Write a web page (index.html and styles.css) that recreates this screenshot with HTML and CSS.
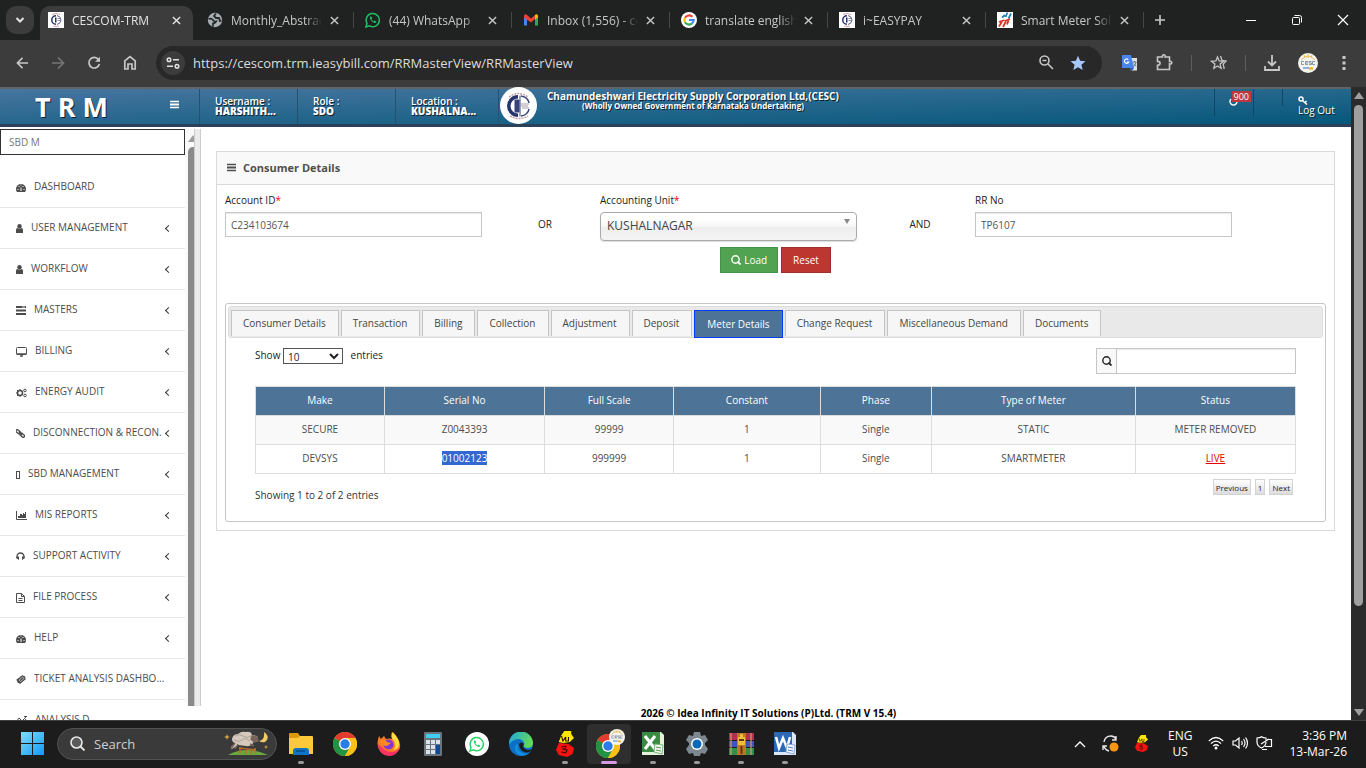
FILE: index.html
```html
<!DOCTYPE html>
<html lang="en">
<head>
    <meta charset="UTF-8">
    <meta name="viewport" content="width=device-width, initial-scale=1.0">
    <title>CESCOM-TRM</title>
    <link rel="stylesheet" href="styles.css">
</head>
<body>

<!-- shared icons -->
<svg class="sprite" aria-hidden="true">
    <symbol id="close" viewBox="0 0 10 10"><path d="M1 1l8 8M9 1l-8 8" stroke="currentColor" stroke-width="1.6" fill="none"/></symbol>
    <symbol id="cesc" viewBox="0 0 16 16"><rect width="16" height="16" fill="#fff"/><path d="M8 3a5 5 0 0 0 0 10V11.500a3.500 3.500 0 0 1 0-7z" fill="#2a356b"/><path d="M7 5.500v5h1.500v-5z" fill="#2a356b"/><path d="M9 3.500q4 1 4 4.500t-4 4.500" fill="none" stroke="#5a628f" stroke-width="1"/><path d="M9.500 6.500h3M9.500 8.500h3" stroke="#8d8fa8" stroke-width="1"/><path d="M4 2.500q4-2 8 0M5 14q3 1 6 0" fill="none" stroke="#c58f95" stroke-width=".8"/></symbol>
    <symbol id="whatsapp" viewBox="0 0 16 16"><path d="M1 15l1-3.700a6.600 6.600 0 1 1 2.600 2.600z" fill="none" stroke="currentColor" stroke-width="1.500"/><path d="M5.700 4.300c-1.200.7-1 2.500.6 4.400s3.700 3 4.900 1.600l.2-.9-1.800-.9-.9.9c-1-.4-1.800-1.200-2.200-2.100l.7-.8-.8-2z" fill="currentColor"/></symbol>
    <symbol id="chrome" viewBox="0 0 24 24"><circle cx="12" cy="12" r="12" fill="#fbc116"/><path d="M12 12L1.600 6a12 12 0 0 1 20.800 0z" fill="#e33b2e"/><path d="M12 12L1.600 6a12 12 0 0 0 10.400 18l5-9z" fill="#229342"/><path d="M12 6h10.400A12 12 0 0 1 12 24l5.200-9z" fill="#fbc116"/><circle cx="12" cy="12" r="6" fill="#fff"/><circle cx="12" cy="12" r="4.700" fill="#2a7de8"/></symbol>
    <symbol id="lens" viewBox="0 0 10 10"><circle cx="4.500" cy="4.500" r="3.700" fill="none" stroke="currentColor" stroke-width="1.400"/><path d="M6.500 6.500l3 3" stroke="currentColor" stroke-width="1.800"/></symbol>
    <symbol id="bars" viewBox="0 0 10 9"><path d="M0 1h10M0 4.500h10M0 8h10" stroke="currentColor" stroke-width="2"/></symbol>
    <symbol id="dash" viewBox="0 0 10 9"><path d="M1 9Q0 8 0 6a5 5 0 0 1 10 0q0 2-1 3z" fill="currentColor"/><path d="M5 8V4.500M1.500 6.500h1M7.500 6.500h1M2.500 3.500h1M6.500 3.500h1M4.500 2h1" stroke="#fff" stroke-width="1"/></symbol>
    <symbol id="user" viewBox="0 0 7 9"><circle cx="3.500" cy="2.200" r="2.200" fill="currentColor"/><path d="M0 9V6q0-2 1.500-2 2 1.200 4 0Q7 4 7 6v3z" fill="currentColor"/></symbol>
    <symbol id="ants" viewBox="0 0 13 26"><path d="M6 0h5v3l2 4-3 4-5 1-3-1 2-7z" fill="#ffe800"/><path d="M2 12l7 1 4 4-1 6-4 3-6-2-2-5z" fill="#f91212"/><path d="M4 5l1 5 2-4v4h2V6M4 16l3-1v2l-2 1 3 1-1 3-3-1" fill="none" stroke="#2b0c00" stroke-width=".8"/></symbol>
    <symbol id="avatar" viewBox="0 0 20 20"><circle cx="10" cy="10" r="10" fill="#f4f3ee"/><path d="M3 7q7-8 14 0M10 1v4M6 2l1 3M14 2l-1 3" fill="none" stroke="#e9bd55" stroke-width="1"/><path d="M6 8.500H3.500v3H6M10 8.500H7.500v3H10M7.500 10H10M13.500 8.500H11V10h2.500v1.500H11M17 8.500h-2.500v3H17" fill="none" stroke="#6f8296" stroke-width=".8"/><path d="M5 15h6" stroke="#8eb4d8" stroke-width="2"/><path d="M11 15.500h4" stroke="#f1b52d" stroke-width="2.500"/></symbol>
</svg>

<div class="tab-strip">
    <button class="tab-search" aria-label="Search tabs"><svg width="10" height="6" viewBox="0 0 10 6"><path d="M1.500 1L5 4.500 8.500 1" fill="none" stroke="#e3e3e3" stroke-width="2"/></svg></button>
    <div class="tab active">
        <svg width="16" height="16"><use href="#cesc"/></svg>
        <span class="tab-title">CESCOM-TRM</span>
        <button class="tab-close" aria-label="Close tab"><svg width="9" height="9"><use href="#close"/></svg></button>
    </div>
    <div class="tab">
        <svg width="16" height="16" viewBox="0 0 16 16"><circle cx="8" cy="8" r="7.200" fill="#a9aeb3"/><path d="M1.500 7q3-1 4.500 1t3 1.500q-1 2-3 2L6 14.500M9 1.500L7 4l2 2h3l1 3 1.500-.5" fill="none" stroke="#25292b" stroke-width="1.800"/></svg>
        <span class="tab-title">Monthly_Abstract</span>
        <button class="tab-close" aria-label="Close tab"><svg width="9" height="9"><use href="#close"/></svg></button>
    </div>
    <div class="tab divided">
        <svg class="green" width="16" height="16"><use href="#whatsapp"/></svg>
        <span class="tab-title">(44) WhatsApp</span>
        <button class="tab-close" aria-label="Close tab"><svg width="9" height="9"><use href="#close"/></svg></button>
    </div>
    <div class="tab divided">
        <svg width="16" height="16" viewBox="0 0 16 16"><path d="M1 4v9.500h3V7z" fill="#4285f4"/><path d="M12 7v6.500h3V4z" fill="#34a853"/><path d="M1 3.500Q2.500 1.500 4 3l4 3.500L12 3v4l-4 3.500L1 5.500z" fill="#ea4335"/><path d="M12 3q2-1.500 3 .5v2L12 7.500z" fill="#fbbc04"/></svg>
        <span class="tab-title">Inbox (1,556) - ces</span>
        <button class="tab-close" aria-label="Close tab"><svg width="9" height="9"><use href="#close"/></svg></button>
    </div>
    <div class="tab divided">
        <svg width="16" height="16" viewBox="0 0 16 16"><circle cx="8" cy="8" r="8" fill="#fff"/><g fill="none" stroke-width="2.200"><path d="M11.300 4.800A4.600 4.600 0 0 0 4 5.800" stroke="#ea4335"/><path d="M4 5.800a4.600 4.600 0 0 0 0 4.400" stroke="#fbbc04"/><path d="M4 10.200a4.600 4.600 0 0 0 7 1.200" stroke="#34a853"/><path d="M11 11.400A4.600 4.600 0 0 0 12.600 8H8" stroke="#4285f4"/></g></svg>
        <span class="tab-title">translate english</span>
        <button class="tab-close" aria-label="Close tab"><svg width="9" height="9"><use href="#close"/></svg></button>
    </div>
    <div class="tab divided">
        <svg width="16" height="16"><use href="#cesc"/></svg>
        <span class="tab-title">i~EASYPAY</span>
        <button class="tab-close" aria-label="Close tab"><svg width="9" height="9"><use href="#close"/></svg></button>
    </div>
    <div class="tab divided">
        <svg width="16" height="16" viewBox="0 0 16 16"><rect width="16" height="16" fill="#fff"/><g fill="none" stroke-width="1.800"><path d="M8.500 5l2-4.500M11.500 6.500l2.500-5M5 5.500L8 3" stroke="#2382b8"/><path d="M2 14.500l3-5M6 15l3-6M10 12.500l1.500-4M2 10l5.500-2M8 9l5-2" stroke="#dc3527"/></g></svg>
        <span class="tab-title">Smart Meter Solution</span>
        <button class="tab-close" aria-label="Close tab"><svg width="9" height="9"><use href="#close"/></svg></button>
    </div>
    <button class="new-tab" aria-label="New tab"><svg width="12" height="12" viewBox="0 0 12 12"><path d="M6 1v10M1 6h10" stroke="#c7c7c7" stroke-width="1.600"/></svg></button>
    <div class="window-controls">
        <button aria-label="Minimize"><svg width="12" height="12" viewBox="0 0 12 12"><path d="M1 6.500h10" stroke="#fff"/></svg></button>
        <button aria-label="Restore"><svg width="12" height="12" viewBox="0 0 12 12"><rect x="1.500" y="3.500" width="7" height="7" rx="1" fill="none" stroke="#fff"/><path d="M3.500 1.500h5q2 0 2 2v5" fill="none" stroke="#fff"/></svg></button>
        <button aria-label="Close"><svg width="12" height="12" viewBox="0 0 12 12"><path d="M1 1l10 10M11 1L1 11" stroke="#fff" stroke-width="1.200"/></svg></button>
    </div>
</div>

<div class="toolbar">
    <div class="nav-buttons">
        <button aria-label="Back"><svg width="13" height="14" viewBox="0 0 14 14"><path d="M13 7H2M7 1.500L1.500 7 7 12.500" fill="none" stroke="#c7c7c7" stroke-width="1.700"/></svg></button>
        <button aria-label="Forward"><svg width="14" height="14" viewBox="0 0 14 14"><path d="M1 7h11M7 1.500L12.500 7 7 12.500" fill="none" stroke="#757575" stroke-width="1.700"/></svg></button>
        <button aria-label="Reload"><svg width="14" height="14" viewBox="0 0 14 14"><path d="M11.500 3.500A5.300 5.300 0 1 0 12.400 8" fill="none" stroke="#c7c7c7" stroke-width="1.700"/><path d="M13 .8v5H8z" fill="#c7c7c7"/></svg></button>
        <button aria-label="Home"><svg width="14" height="15" viewBox="0 0 14 15"><path d="M1.800 5.800L7 1.500l5.200 4.300V14H9V9H5v5H1.800z" fill="none" stroke="#c7c7c7" stroke-width="1.700"/></svg></button>
    </div>
    <div class="omnibox">
        <button class="site-info" aria-label="Site information"><svg width="14" height="12" viewBox="0 0 14 12"><g fill="none" stroke="#e3e3e3" stroke-width="1.500"><circle cx="3" cy="2.800" r="1.800"/><path d="M7 2.800h6M1 9.200h6"/><circle cx="11" cy="9.200" r="1.800"/></g></svg></button>
        <input type="text" aria-label="Address" value="https://cescom.trm.ieasybill.com/RRMasterView/RRMasterView">
        <button aria-label="Zoom"><svg width="15" height="15" viewBox="0 0 15 15"><circle cx="5.500" cy="5.500" r="4.500" fill="none" stroke="#c7c7c7" stroke-width="1.600"/><path d="M9 9l5 5M3.500 5.500h4" stroke="#c7c7c7" stroke-width="1.600"/></svg></button>
        <button aria-label="Bookmark"><svg width="16" height="16" viewBox="0 0 16 16"><path d="M8 .8l2.100 5 5.400.4-4.100 3.500 1.300 5.300L8 12.200 3.300 15l1.300-5.300L.5 6.200l5.400-.4z" fill="#a8c7fa"/></svg></button>
    </div>
    <div class="extensions">
        <button aria-label="Translate"><svg width="16" height="16" viewBox="0 0 16 16"><path d="M6 3h9v12.500H9z" fill="#dfe1e3"/><path d="M0 0h9l3 13H0z" fill="#4a86f0"/><path d="M8 13h4l-2.500 3z" fill="#2459b8"/><path d="M6.200 4.600A2.200 2.200 0 1 0 6.700 7H4.800" fill="none" stroke="#fff" stroke-width="1.200"/><path d="M10.500 7h4M12.500 6v1M11 12q2.500-2 3-5M11.500 8.500l2.500 3" fill="none" stroke="#68788a"/></svg></button>
        <button aria-label="Extensions"><svg width="17" height="17" viewBox="0 0 17 17"><path d="M1.500 3h5Q6 .8 7.800.8T9.100 3h4.400v4.500q2.300-.4 2.300 1.200t-2.300 1.200V15.500h-12v-4.300q2.600-.3 2.600-2T1.500 7.400z" fill="none" stroke="#c7c7c7" stroke-width="1.600"/></svg></button>
        <span class="split"></span>
        <button aria-label="Favorites"><svg width="17" height="16" viewBox="0 0 17 16"><path d="M7.500 2l1.600 4 4.400.3-3.400 2.800 1.100 4.200-3.700-2.300-3.700 2.300 1.100-4.200L1.500 6.300 5.900 6zM10.500 1l1.500 4.500 4.200.5-3 3 1 5" fill="none" stroke="#c7c7c7" stroke-width="1.300"/></svg></button>
        <span class="split"></span>
        <button aria-label="Downloads"><svg width="16" height="16" viewBox="0 0 16 16"><path d="M8 0v10M4 6.500L8 10.500l4-4M1 11v4h14v-4" fill="none" stroke="#c7c7c7" stroke-width="1.800"/></svg></button>
        <button aria-label="Profile"><svg width="20" height="20"><use href="#avatar"/></svg></button>
        <button class="more" aria-label="More"><svg width="4" height="14" viewBox="0 0 4 14"><path d="M.5 0h3v3h-3zM.5 5.500h3v3h-3zM.5 11h3v3h-3z" fill="#c7c7c7"/></svg></button>
    </div>
</div>

<div class="viewport">
    <div class="page">
        <header class="top-header">
            <div class="brand">
                <h1>T R M</h1>
                <button class="menu-toggle" aria-label="Toggle menu"><svg width="9" height="9" viewBox="0 0 10 9"><use href="#bars"/></svg></button>
            </div>
            <div class="info"><span>Username :</span><b>HARSHITH...</b></div>
            <div class="info"><span>Role :</span><b>SDO</b></div>
            <div class="info location"><span>Location :</span><b>KUSHALNA...</b></div>
            <svg class="logo" width="37" height="37" viewBox="0 0 37 37"><circle cx="18.500" cy="18.500" r="18.500" fill="#fff"/><path d="M18 8a11 11 0 0 0 0 22v-3.500a7.500 7.500 0 0 1 0-15z" fill="#27336d"/><path d="M15 13h4v12h-4zM20 8.500v21" fill="#38437a" stroke="#38437a" stroke-width="1"/><path d="M21 9q7 1 8 7M21 29q7-1 8-7" fill="none" stroke="#38437a" stroke-width="1.500"/><path d="M21 17h8M21 19h7M22 21h7" stroke="#a6a2ae" stroke-width="1.200"/><path d="M9 10q9-7 19 0M10 29q9 5 18 0" fill="none" stroke="#c29ba2" stroke-width="1.500" stroke-dasharray="2 1"/></svg>
            <div class="company">
                <p>Chamundeshwari Electricity Supply Corporation Ltd,(CESC)</p>
                <small>(Wholly Owned Government of Karnataka Undertaking)</small>
            </div>
            <div class="notify">
                <svg width="9" height="10" viewBox="0 0 9 10"><path d="M2 3a3.500 3.500 0 1 0 5 0" fill="none" stroke="#fff" stroke-width="1.500"/></svg>
                <span class="badge">900</span>
            </div>
            <div class="mini-split"></div>
            <a class="logout" href="#">
                <svg width="10" height="9" viewBox="0 0 10 9"><circle cx="3" cy="3" r="2" fill="none" stroke="#fff" stroke-width="1.500"/><path d="M4.500 4.500l4.500 4M7 6.500L8.500 5" stroke="#fff" stroke-width="1.500"/></svg>
                Log Out
            </a>
        </header>

        <div class="body">
            <aside class="sidebar">
                <nav class="menu">
                    <input class="menu-search" type="text" aria-label="Search menu" value="SBD M">
                    <a href="#"><svg width="10" height="9"><use href="#dash"/></svg>DASHBOARD</a>
                    <a class="sub" href="#"><svg width="7" height="9"><use href="#user"/></svg>USER MANAGEMENT</a>
                    <a class="sub" href="#"><svg width="7" height="9"><use href="#user"/></svg>WORKFLOW</a>
                    <a class="sub" href="#"><svg width="10" height="9" viewBox="0 0 10 9"><path d="M0 1h10M0 4.500h10M0 8h10" stroke="currentColor" stroke-width="2"/><path d="M6 1h3" stroke="#fff" stroke-width=".8"/></svg>MASTERS</a>
                    <a class="sub" href="#"><svg width="11" height="10" viewBox="0 0 11 10"><rect x=".5" y=".5" width="10" height="7" rx="1" fill="none" stroke="currentColor"/><path d="M.5 7h10M4 9h3" stroke="currentColor" stroke-width="1.500"/></svg>BILLING</a>
                    <a class="sub" href="#"><svg width="11" height="10" viewBox="0 0 11 10"><g fill="none" stroke="currentColor"><circle cx="4" cy="5" r="2.500" stroke-width="1.500"/><path d="M4 1v1M4 8v1M0 5h1M1 2l1 1M1 8l1-1M7 5H6"/><circle cx="9" cy="2.500" r="1.300"/><circle cx="9" cy="7.500" r="1.300"/></g></svg>ENERGY AUDIT</a>
                    <a class="sub" href="#"><svg width="9" height="9" viewBox="0 0 9 9"><g fill="none" stroke="currentColor" stroke-width="1.400"><rect x="-.5" y="1.500" width="5" height="2.500" rx="1" transform="rotate(40 2 3)"/><rect x="4" y="5" width="5" height="2.500" rx="1" transform="rotate(40 6.500 6)"/><path d="M3 3l3 3"/></g></svg>DISCONNECTION &amp; RECON.</a>
                    <a class="sub" href="#"><svg width="4" height="8" viewBox="0 0 4 8"><rect x=".5" y=".5" width="3" height="7" fill="none" stroke="currentColor"/></svg>SBD MANAGEMENT</a>
                    <a class="sub" href="#"><svg width="11" height="9" viewBox="0 0 11 9"><path d="M.5 0v8.500H11" fill="none" stroke="currentColor"/><path d="M2 7V5h2V3h2v1h1V2h1v1h1V1h1v6z" fill="currentColor"/></svg>MIS REPORTS</a>
                    <a class="sub" href="#"><svg width="9" height="9" viewBox="0 0 9 9"><path d="M1 6V4.500a3.500 3.500 0 0 1 7 0V6" fill="none" stroke="currentColor" stroke-width="1.300"/><path d="M1 4.500h2V8L0 6zM6 4.500h2L9 6 6 8z" fill="currentColor"/></svg>SUPPORT ACTIVITY</a>
                    <a class="sub" href="#"><svg width="9" height="10" viewBox="0 0 9 10"><path d="M.5.500h5l3 3v6h-8zM5.500.500v3h3M2.500 5.500h4M2.500 7.500h4" fill="none" stroke="currentColor"/></svg>FILE PROCESS</a>
                    <a class="sub" href="#"><svg width="10" height="9"><use href="#dash"/></svg>HELP</a>
                    <a href="#"><svg width="10" height="9" viewBox="0 0 10 9"><path d="M6.500 0l1 1 .5-.3L9.500 2 9 3l1 1-6 5-1-1-.5.200L1 7l.5-1-1.500-1z" fill="currentColor"/><path d="M3 5l3.500-3L8 3.500 4.500 6.500z" fill="none" stroke="#fff" stroke-width=".6"/></svg>TICKET ANALYSIS DASHBO...</a>
                    <a href="#"><svg width="11" height="9" viewBox="0 0 11 9"><path d="M0 6l3-4 3 3 4.500-4.500M1 8l3-4 3 3 3-4M8 .5h3" fill="none" stroke="currentColor"/></svg>ANALYSIS D</a>
                </nav>
                <div class="menu-scroll"><span class="arrow-up"></span><span class="thumb"></span></div>
                <div class="gutter"></div>
            </aside>

            <main class="content">
                <section class="panel">
                    <h2><svg width="9" height="9" viewBox="0 0 10 9"><use href="#bars"/></svg>Consumer Details</h2>
                    <form class="search-form">
                        <div class="fields">
                            <div class="field">
                                <label for="account">Account ID<i>*</i></label>
                                <input type="text" id="account" value="C234103674">
                            </div>
                            <span class="joiner">OR</span>
                            <div class="field">
                                <label for="unit">Accounting Unit<i>*</i></label>
                                <div class="chosen">
                                    <select id="unit"><option>KUSHALNAGAR</option></select>
                                </div>
                            </div>
                            <span class="joiner">AND</span>
                            <div class="field">
                                <label for="rrno">RR No</label>
                                <input type="text" id="rrno" value="TP6107">
                            </div>
                        </div>
                        <div class="buttons">
                            <button type="button" class="btn load"><svg width="10" height="10"><use href="#lens"/></svg>Load</button>
                            <button type="button" class="btn reset">Reset</button>
                        </div>
                    </form>

                    <div class="tabs-box">
                        <div class="tabs">
                            <button>Consumer Details</button>
                            <button>Transaction</button>
                            <button>Billing</button>
                            <button>Collection</button>
                            <button>Adjustment</button>
                            <button>Deposit</button>
                            <button class="current">Meter Details</button>
                            <button>Change Request</button>
                            <button>Miscellaneous Demand</button>
                            <button>Documents</button>
                        </div>
                        <div class="tab-body">
                            <div class="table-tools">
                                <label class="length">Show
                                    <select><option>10</option><option>25</option></select>
                                    entries</label>
                                <div class="filter">
                                    <label for="filter"><svg width="10" height="10"><use href="#lens"/></svg></label>
                                    <input type="text" id="filter" aria-label="Filter">
                                </div>
                            </div>
                            <table>
                                <colgroup><col class="c1"><col class="c2"><col class="c1"><col class="c3"><col class="c4"><col class="c5"><col class="c2"></colgroup>
                                <thead>
                                    <tr><th>Make</th><th>Serial No</th><th>Full Scale</th><th>Constant</th><th>Phase</th><th>Type of Meter</th><th>Status</th></tr>
                                </thead>
                                <tbody>
                                    <tr><td>SECURE</td><td>Z0043393</td><td>99999</td><td>1</td><td>Single</td><td>STATIC</td><td>METER REMOVED</td></tr>
                                    <tr><td>DEVSYS</td><td><mark>01002123</mark></td><td>999999</td><td>1</td><td>Single</td><td>SMARTMETER</td><td><a href="#">LIVE</a></td></tr>
                                </tbody>
                            </table>
                            <div class="table-foot">
                                <p>Showing 1 to 2 of 2 entries</p>
                                <div class="pager">
                                    <button>Previous</button>
                                    <button>1</button>
                                    <button>Next</button>
                                </div>
                            </div>
                        </div>
                    </div>
                </section>
                <footer>2026 © Idea Infinity IT Solutions (P)Ltd. (TRM V 15.4)</footer>
            </main>
        </div>
    </div>
    <div class="page-scroll"><span class="arrow-up"></span><span class="thumb"></span><span class="rest"></span><span class="arrow-down"></span></div>
</div>

<div class="taskbar">
    <button class="start" aria-label="Start"><svg width="23" height="23" viewBox="0 0 23 23"><defs><linearGradient id="win" x1="0" y1="0" x2="1" y2="1"><stop offset="0" stop-color="#7fdcfb"/><stop offset="1" stop-color="#1399f5"/></linearGradient></defs><path d="M0 0h11v11H0zM12 0h11v11H12zM0 12h11v11H0zM12 12h11v11H12z" fill="url(#win)"/></svg></button>
    <div class="task-search">
        <svg width="15" height="15" viewBox="0 0 15 15"><circle cx="6.500" cy="6.500" r="5.500" fill="#5a5a5a" stroke="#e8e8e8" stroke-width="1.600"/><path d="M10.500 10.500l4 4" stroke="#e8e8e8" stroke-width="1.800"/></svg>
        <input type="text" aria-label="Search" placeholder="Search">
        <svg width="46" height="25" viewBox="0 0 46 25"><path d="M4 24q18-10 40 0z" fill="#6ba73c"/><path d="M16 22v-6M31 22v-5M15 17l17 2M22 19v4M27 19v4" stroke="#b56e2c" stroke-width="1.600"/><path d="M8 8q1-5 6-5 3-3 8-2 5-1 6 3l5 1 1 4-4 1q-2 6-8 5l-8-1-6 4-1-2 4-4q-3-1-3-4z" fill="#d5c8bc"/><path d="M11 5q4-3 8 0t8 0M10 9q5 3 8 0t8 1" fill="none" stroke="#b0a096"/><path d="M28 5l5 1 1 4-4 1-3-3zM11 12l-4 6M14 13l-3 5M26 13l4 2" fill="#77655b" stroke="#77655b" stroke-width="1.400"/><path d="M40 1q7 5 1 10-3 1-6-1 6-1 5-9z" fill="#f3cb66"/><path d="M3 3l.8 2.200L6 6l-2.200.8L3 9l-.8-2.200L0 6l2.200-.8zM42 14l.6 1.400L44 16l-1.400.6L42 18l-.6-1.400L40 16l1.400-.6z" fill="#e5a93c"/></svg>
    </div>
    <div class="apps">
        <button class="running" aria-label="File Explorer"><svg width="24" height="24" viewBox="0 0 24 24"><path d="M0 2q0-1 1-1h8l2 3h12v7H0z" fill="#d99a0b"/><path d="M0 6h9l2-2h12q1 0 1 1v17H0z" fill="#fcc93b"/><path d="M4 23v-4q0-3 3-3h10q3 0 3 3v4z" fill="#1173c5"/><path d="M7 19h9" stroke="#0b5597" stroke-width="2"/></svg></button>
        <button aria-label="Chrome"><svg width="24" height="24"><use href="#chrome"/></svg></button>
        <button aria-label="Firefox"><svg width="24" height="24" viewBox="0 0 24 24"><path d="M2 4l2 3 3-3 2 3q4-1 6 0-1-4 1-7 3 3 5 7 5 8-1 13-7 6-15 1-7-6-3-17z" fill="#ff7a25"/><path d="M15 0q-2 5 2 9 3 5-1 9 7-1 6-8-1-5-7-10z" fill="#ffdc3b"/><path d="M1 12q1 12 12 12 7-1 10-8-7 7-15 2-4-3-7-6z" fill="#f93363"/><circle cx="11.500" cy="12.500" r="5" fill="#8138d5"/><path d="M3 8q5-1 7 2l4 1-4 3q-5 0-7-6z" fill="#ff8a21"/></svg></button>
        <button aria-label="Calculator"><svg width="18" height="24" viewBox="0 0 18 24"><rect width="18" height="24" rx="1" fill="#69747d"/><path d="M2 2h14v4H2z" fill="#40cef4"/><path d="M2 8h4v4H2zM7 8h4v4H7zM12 8h4v4h-4zM2 13h4v4H2zM7 13h4v4H7zM2 18h4v4H2zM7 18h4v4H7z" fill="#dae2e9"/><path d="M12 13h4v9h-4z" fill="#0b4d91"/></svg></button>
        <button class="wa" aria-label="WhatsApp"><svg width="24" height="24" viewBox="0 0 24 24"><circle cx="12" cy="12" r="12" fill="#fff"/><use href="#whatsapp" x="4" y="4" width="16" height="16"/></svg></button>
        <button aria-label="Edge"><svg width="24" height="24" viewBox="0 0 24 24"><defs><linearGradient id="edge" x1="0" y1="0" x2="1" y2=".3"><stop offset="0" stop-color="#1ba8e8"/><stop offset="1" stop-color="#63d956"/></linearGradient></defs><circle cx="12" cy="12" r="12" fill="#0c70c6"/><path d="M0 12A12 12 0 0 1 24 11q0 5-6 5-5-1-3-3 1-3-2-5Q7 5 0 12z" fill="url(#edge)"/><path d="M9 12q-2 6 4 9 4 2 8-1-4 5-11 3-5-4-4-8 1-3 3-3z" fill="#1391dc"/><path d="M10 12q2-3 5 0-2 3 1 5 3 2 7 0-3 5-8 3-5-3-5-8z" fill="#1c1c1c"/></svg></button>
        <button class="running" aria-label="Billing tool"><svg width="18" height="26" viewBox="0 0 13 26" preserveAspectRatio="none"><use href="#ants"/></svg></button>
        <button class="running focused" aria-label="Chrome, CESCOM profile"><svg width="34" height="30" viewBox="0 0 34 30"><use href="#chrome" x="4" y="5" width="24" height="24"/><use href="#avatar" x="17" y="0" width="16" height="16"/></svg></button>
        <button class="running" aria-label="Excel"><svg width="23" height="23" viewBox="0 0 23 23"><path d="M0 0h19l3 3v20H0z" fill="#e3f1dc"/><path d="M0 0h18v20H0z" fill="#398d43"/><path d="M3 4l10 13M13 4L3 17" stroke="#fff" stroke-width="3"/><path d="M13 12l8 1-1 9-8-2z" fill="#f2f8ee" stroke="#78b77c"/><path d="M14 15l5 1M14 18l5 1" stroke="#4d9a56"/></svg></button>
        <button class="running" aria-label="Settings"><svg width="24" height="24" viewBox="0 0 24 24"><path d="M9 0h6l1 4 4-1 3 5-3 3v2l3 4-3 5-4-1-1 3H9l-1-3-4 1-3-5 3-4v-2L1 8l3-5 4 1z" fill="#7d8790"/><circle cx="12" cy="12" r="6" fill="#fff"/><circle cx="12" cy="12" r="4.500" fill="#0b69bd"/></svg></button>
        <button class="running" aria-label="WinRAR"><svg width="25" height="24" viewBox="0 0 25 24"><path d="M0 1h25v7H0z" fill="#b0314d"/><path d="M0 9h25v6H0z" fill="#4355b8"/><path d="M0 16h25v7H0z" fill="#339048"/><path d="M2 1v22M22 1v22" stroke="#e3aa75"/><path d="M8 1h9v22H8z" fill="#bd7726"/><path d="M9 5h7v8H9zM11 2h3v4h-3z" fill="#f2bd3a"/><path d="M10 8h5M12.500 14v8" stroke="#603712" stroke-width="2"/></svg></button>
        <button class="running" aria-label="Word"><svg width="23" height="23" viewBox="0 0 23 23"><path d="M0 0h19l3 3v20H0z" fill="#dce8f7"/><path d="M0 0h18v20H0z" fill="#2b68b5"/><path d="M2 5l3 11 4-10 4 10L16 5" fill="none" stroke="#fff" stroke-width="2.500"/><path d="M13 12l8 1-1 9-8-2z" fill="#f4f8fc" stroke="#86abd9"/><path d="M14 15l5 1M14 18l5 1" stroke="#4d7fbe"/></svg></button>
    </div>
    <div class="tray">
        <svg width="12" height="8" viewBox="0 0 12 8"><path d="M1 7l5-5 5 5" fill="none" stroke="#fff" stroke-width="1.400"/></svg>
        <svg width="17" height="17" viewBox="0 0 17 17"><path d="M2 7q1-6 7-6 3 0 5 3M14 1v4h-4M7 16q-4-1-5-5M5 11H1v4" fill="none" stroke="#e8e8e8" stroke-width="1.400"/><circle cx="12" cy="12" r="4.500" fill="#fb9711"/></svg>
        <svg width="13" height="17" viewBox="0 0 13 26" preserveAspectRatio="none"><use href="#ants"/></svg>
        <div class="lang">ENG<br>US</div>
        <div class="status">
            <svg width="16" height="14" viewBox="0 0 16 14"><g fill="none" stroke="#fff" stroke-width="1.300"><path d="M.8 5q7.200-7 14.400 0M3 7.500q5-4.800 10 0M5.300 10q2.700-2.500 5.400 0"/></g><circle cx="8" cy="12" r="1.500" fill="#fff"/></svg>
            <svg width="16" height="14" viewBox="0 0 16 14"><path d="M1 5h2.500L7 2v10L3.500 9H1zM9.500 5q1.500 2 0 4M11.500 3q3 4 0 8M13.500 1.500q4 5.500 0 11" fill="none" stroke="#fff" stroke-width="1.200"/></svg>
            <svg width="17" height="15" viewBox="0 0 17 15"><path d="M1 2q3 0 4.500-1.300Q7 2 10 2v4q0 4-4.500 6Q1 10 1 6zM11 3.500h4.500v7H9M11 13.500H6M5 8l8-5" fill="none" stroke="#fff" stroke-width="1.200"/></svg>
        </div>
        <div class="clock">3:36 PM<br>13-Mar-26</div>
    </div>
</div>

</body>
</html>
```

FILE: styles.css
```css
* {
    box-sizing: border-box;
}
html, body {
    height: 100%;
    margin: 0;
}
body {
    display: flex;
    flex-direction: column;
    overflow: hidden;
    font-family: "Open Sans", sans-serif;
    font-size: 10px;
    color: #333;
    background-color: #fff;
}
button, input, select {
    font-family: inherit;
    font-size: inherit;
    color: inherit;
    margin: 0;
}
button {
    padding: 0;
    border: none;
    background: none;
    cursor: pointer;
}
svg {
    display: block;
    flex-shrink: 0;
}
.sprite {
    display: none;
}

/* Browser tabs */
.tab-strip {
    display: flex;
    flex-shrink: 0;
    height: 40px;
    padding: 6px 12px 0 6px;
    background-color: #1f2221;
    color: #c7c7c7;
    font-size: 12px;
}
.tab-search {
    display: flex;
    align-items: center;
    justify-content: center;
    width: 28px;
    height: 28px;
    margin-right: 6px;
    border-radius: 10px;
    background-color: #3c3c3c;
}
.tab {
    display: flex;
    align-items: center;
    width: 155px;
    height: 28px;
    padding: 0 14px 0 9px;
}
.tab.active {
    width: 153px;
    height: 34px;
    padding: 0 12px 6px 8px;
    margin-right: 5px;
    border-radius: 10px 10px 0 0;
    background-color: #3c3c3c;
    color: #e3e3e3;
}
.tab.divided {
    width: 158px;
    padding-left: 12px;
    background: linear-gradient(#444746, #444746) no-repeat 0 6px / 1px 16px;
}
.tab-title {
    flex: 1;
    margin: 0 8px;
    overflow: hidden;
    white-space: nowrap;
    -webkit-mask-image: linear-gradient(to right, #000 82%, transparent);
    mask-image: linear-gradient(to right, #000 82%, transparent);
}
.green {
    color: #21c063;
}
.new-tab {
    width: 34px;
    height: 28px;
    padding-left: 11px;
    background: linear-gradient(#444746, #444746) no-repeat 0 6px / 1px 16px;
}
.window-controls {
    display: flex;
    gap: 34px;
    height: 28px;
    margin: 0 5px 0 auto;
}

/* Browser toolbar */
.toolbar {
    display: flex;
    align-items: center;
    flex-shrink: 0;
    height: 47px;
    padding: 0 20px 2px 16px;
    background-color: #3c3c3c;
}
.nav-buttons {
    display: flex;
    gap: 22px;
    margin-right: 19px;
}
.omnibox {
    display: flex;
    flex: 1;
    align-items: center;
    gap: 16px;
    height: 34px;
    padding: 0 16px 0 5px;
    border-radius: 17px;
    background-color: #282828;
}
.omnibox input {
    flex: 1;
    min-width: 0;
    margin-left: -8px;
    padding: 0;
    border: none;
    outline: none;
    background: none;
    color: #dcdcdc;
    font-size: 13px;
}
.site-info {
    display: flex;
    align-items: center;
    justify-content: center;
    width: 24px;
    height: 24px;
    border-radius: 50%;
    background-color: #3c3c3c;
}
.extensions {
    display: flex;
    align-items: center;
    gap: 18px;
    margin-left: 20px;
}
.extensions .more {
    margin-left: 6px;
}
.split {
    width: 1px;
    height: 16px;
    background-color: #5e5e5e;
}

/* Page */
.viewport {
    display: flex;
    flex: 1;
    min-height: 0;
}
.page {
    display: flex;
    flex: 1;
    flex-direction: column;
    min-width: 0;
}
.top-header {
    display: flex;
    flex-shrink: 0;
    height: 40px;
    border-top: 2px solid #5f6468;
    border-bottom: 3px solid #2c4158;
    background: linear-gradient(to bottom right, #47759f, #04587a);
    color: #fff;
    line-height: 10px;
    text-shadow: 1px 1px 0 #14212c;
}
.brand {
    display: flex;
    align-items: center;
    justify-content: space-between;
    width: 200px;
    padding: 0 20px 0 35px;
    border-right: 1px solid #27506e;
}
.brand h1 {
    margin: 0;
    font-size: 27px;
    line-height: 35px;
}
.menu-toggle {
    padding-bottom: 4px;
}
.info {
    width: 98px;
    padding: 7px 0 0 15px;
    border-right: 1px solid #27506e;
    font-weight: 600;
}
.info span, .info b {
    display: block;
}
.info.location {
    width: 103px;
}
.logo {
    margin: -2px 10px 0 1px;
}
.company {
    text-align: center;
    font-weight: 700;
}
.company p {
    margin: 2px 0 0;
}
.company small {
    display: block;
    font-size: 8px;
}
.notify {
    position: relative;
    width: 40px;
    height: 27px;
    margin-left: auto;
    padding: 7px 0 0 14px;
    border-left: 1px solid #0d4765;
    border-right: 1px solid #0d4765;
}
.badge {
    position: absolute;
    top: 2px;
    right: 2px;
    padding: 0 2px;
    background-color: #c0373d;
    font-size: 9px;
    line-height: 11px;
    text-shadow: none;
}
.mini-split {
    width: 29px;
    height: 17px;
    border-right: 1px solid #0d4765;
}
.logout {
    width: 68px;
    padding: 7px 0 0 15px;
    color: #fff;
    text-decoration: none;
}
.body {
    display: flex;
    flex: 1;
    min-height: 0;
}

/* Sidebar */
.sidebar {
    display: flex;
    flex-shrink: 0;
    padding-top: 2px;
    overflow: hidden;
}
.menu {
    width: 185px;
}
.menu-search {
    display: block;
    width: 185px;
    height: 26px;
    margin-bottom: 12px;
    padding: 0 8px;
    border: 1px solid #333;
    outline: none;
    color: #777;
}
.menu a {
    position: relative;
    display: flex;
    align-items: center;
    gap: 8px;
    height: 41px;
    padding: 0 0 2px 16px;
    border-bottom: 1px solid #e7e7e7;
    color: #4c4c4c;
    text-decoration: none;
    white-space: nowrap;
}
.menu a svg {
    margin-top: 3px;
}
.menu a.sub::after {
    content: "";
    position: absolute;
    top: 18px;
    right: 14px;
    width: 4px;
    height: 4px;
    border-left: 1px solid #333;
    border-bottom: 1px solid #333;
    transform: rotate(45deg);
}
.menu-scroll {
    width: 9px;
    height: 577px;
    padding: 6px 0 0 3px;
    background-color: #fafafa;
    overflow: hidden;
}
.arrow-up, .arrow-down {
    display: block;
    border: 5px solid transparent;
    border-top-width: 0;
    border-bottom: 7px solid #9f9f9f;
}
.arrow-down {
    border-top: 7px solid #9f9f9f;
    border-bottom-width: 0;
}
.menu-scroll .arrow-up {
    width: 10px;
}
.menu-scroll .thumb {
    display: block;
    width: 10px;
    height: 100%;
    margin-top: 5px;
    border-radius: 5px;
    background-color: #8a8a8a;
}
.gutter {
    width: 7px;
    height: 577px;
    border-left: 1px solid #ccc;
    border-right: 1px solid #ccc;
    background-color: #ebebeb;
}

/* Content */
.content {
    display: flex;
    flex: 1;
    flex-direction: column;
    justify-content: space-between;
    min-width: 0;
    padding: 24px 16px 0 15px;
}
.panel {
    border: 1px solid #d9d9d9;
}
.panel h2 {
    display: flex;
    align-items: center;
    gap: 7px;
    height: 33px;
    margin: 0;
    padding: 0 0 2px 10px;
    border-bottom: 1px solid #d9d9d9;
    background-color: #f9f9f9;
    color: #4f4f4f;
    font-size: 11px;
}
.search-form {
    padding: 8px;
}
.fields {
    display: grid;
    grid-template-columns: 257fr 118fr 257fr 118fr 257fr 94fr;
}
.field label {
    display: block;
    height: 19px;
    line-height: 14px;
    color: #222;
}
.field label i {
    color: #f00;
    font-style: normal;
}
.field input, .filter input {
    width: 100%;
    height: 25px;
    padding: 0 5px;
    border: 1px solid #c6c6c6;
    outline: none;
    box-shadow: inset 0 1px 1px #e9e9e9;
    color: #555;
}
.chosen {
    position: relative;
}
.chosen::after {
    content: "";
    position: absolute;
    top: 7px;
    right: 7px;
    border: 3px solid transparent;
    border-top: 5px solid #888;
    border-bottom-width: 0;
}
.chosen select {
    display: block;
    width: 100%;
    height: 29px;
    padding: 0 6px 2px;
    appearance: none;
    border: 1px solid #aaa;
    border-radius: 4px;
    background: linear-gradient(#fff 20%, #f6f6f6 50%, #eee 52%, #f4f4f4);
    box-shadow: 0 1px 1px #ddd;
    color: #444;
    font-size: 12px;
}
.joiner {
    padding: 24px 0 0 8px;
    text-align: center;
    color: #222;
}
.buttons {
    display: flex;
    justify-content: center;
    gap: 3px;
    padding: 6px 0 22px;
}
.btn {
    display: flex;
    align-items: center;
    justify-content: center;
    gap: 3px;
    height: 26px;
    padding: 0 10px;
    border: 1px solid #44914a;
    background-color: #51a351;
    color: #fff;
}
.btn.reset {
    padding: 0 11px;
    border-color: #a02e2a;
    background-color: #bd362f;
}
.tabs-box {
    margin: 0 8px 8px;
    padding: 2px;
    border: 1px solid #c5c5c5;
    border-radius: 3px;
}
.tabs {
    display: flex;
    gap: 2px;
    height: 32px;
    padding: 3px 2px 0;
    border: 1px solid #ddd;
    border-radius: 3px;
    background-color: #e9e9e9;
}
.tabs button {
    height: 26px;
    padding: 0 12px 2px 11px;
    border: 1px solid #c5c5c5;
    border-bottom: none;
    background-color: #f6f6f6;
    color: #454545;
    white-space: nowrap;
}
.tabs button.current {
    height: 28px;
    padding: 0 12px;
    border: 1px solid #003eff;
    background-color: #4d7396;
    color: #fff;
}
.tab-body {
    padding: 10px 27px 17px;
}
.table-tools {
    display: flex;
    justify-content: space-between;
    height: 38px;
    color: #222;
}
.length {
    line-height: 15px;
}
.length select {
    width: 60px;
    height: 16px;
    margin-right: 5px;
    padding: 0;
    border: 1px solid #555;
    border-radius: 0;
    background-color: #fff;
    vertical-align: top;
}
.filter {
    display: flex;
    width: 200px;
    height: 26px;
}
.filter label {
    display: flex;
    align-items: center;
    padding: 0 4px 0 5px;
    border: 1px solid #c6c6c6;
    border-right: none;
    background-color: #f9f9f9;
}
.filter input {
    flex: 1;
    height: 26px;
    min-width: 0;
}
table {
    width: 100%;
    border-collapse: collapse;
    table-layout: fixed;
    text-align: center;
    color: #4c4c4c;
}
.c1 {
    width: 12.400%;
}
.c2 {
    width: 15.400%;
}
.c3 {
    width: 14.100%;
}
.c4 {
    width: 10.700%;
}
.c5 {
    width: 19.600%;
}
th, td {
    height: 29px;
    padding: 0 0 2px;
    border: 1px solid #ddd;
}
th {
    background-color: #4d7396;
    color: #fff;
    font-weight: 400;
}
tbody tr:first-child {
    background-color: #f9f9f9;
}
td a {
    color: #e60000;
}
mark {
    background-color: #3367d1;
    color: #fff;
}
.table-foot {
    display: flex;
    justify-content: space-between;
    padding: 5px 3px 0 0;
}
.table-foot p {
    margin: 9px 0 0;
}
.pager {
    display: flex;
    gap: 4px;
}
.pager button {
    height: 16px;
    padding: 0 2px;
    border: 1px solid #d3d3d3;
    background: linear-gradient(#fff, #dcdcdc);
    font-size: 8px;
    color: #222;
}
footer {
    padding-right: 14px;
    text-align: center;
    color: #000;
    font-weight: 700;
    line-height: 14px;
}

/* Page scrollbar */
.page-scroll {
    display: flex;
    flex-direction: column;
    align-items: center;
    width: 15px;
    padding: 5px 0 4px;
    background-color: #2b2b2b;
}
.page-scroll .thumb {
    flex: 501;
    width: 9px;
    margin-top: 6px;
    border-radius: 5px;
    background-color: #9f9f9f;
}
.rest {
    flex: 103;
}

/* Taskbar */
.taskbar {
    display: flex;
    align-items: center;
    flex-shrink: 0;
    height: 48px;
    padding: 0 19px 2px 21px;
    border-top: 1px solid #3d403f;
    background-color: #1c1c1c;
    color: #fff;
    font-size: 12px;
}
.task-search {
    display: flex;
    align-items: center;
    width: 220px;
    height: 32px;
    margin: 0 2px 0 13px;
    padding: 0 6px 0 12px;
    border: 1px solid #515151;
    border-radius: 16px;
    background-color: #3a3a3a;
}
.task-search input {
    flex: 1;
    min-width: 0;
    padding: 0 9px;
    border: none;
    outline: none;
    background: none;
    font-size: 13px;
}
.task-search input::placeholder {
    color: #d0d0d0;
}
.apps {
    display: flex;
}
.apps button {
    display: flex;
    align-items: center;
    justify-content: center;
    position: relative;
    width: 44px;
    height: 40px;
    border-radius: 4px;
}
.apps .running::after {
    content: "";
    position: absolute;
    bottom: 0;
    left: 19px;
    width: 6px;
    height: 3px;
    border-radius: 2px;
    background-color: #9a9a9a;
}
.apps .focused {
    background-color: #2e2e2e;
}
.apps .focused::after {
    left: 14px;
    width: 16px;
    background-color: #d798e6;
}
.wa {
    color: #25d366;
}
.tray {
    display: flex;
    align-items: center;
    gap: 16px;
    margin-left: auto;
    line-height: 16px;
}
.lang {
    margin-left: 4px;
    text-align: center;
}
.status {
    display: flex;
    gap: 8px;
}
.clock {
    text-align: right;
}
```
